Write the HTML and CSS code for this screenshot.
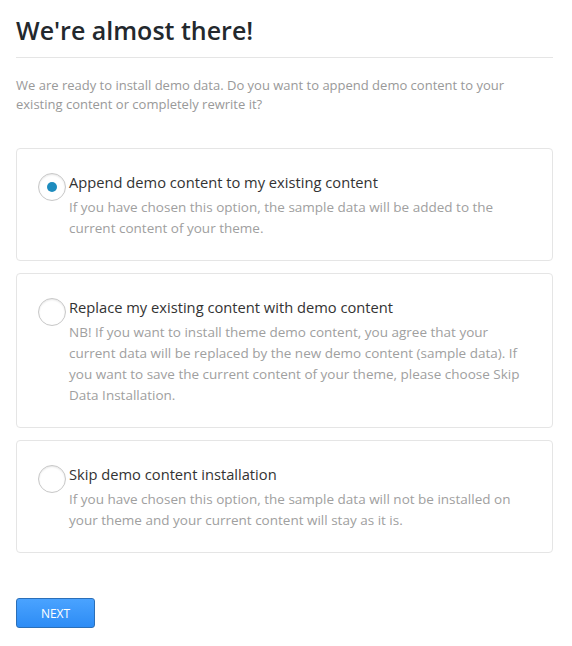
FILE: index.html
```html
<!DOCTYPE html>
<html>
<head>
<meta charset="utf-8">
<link rel="stylesheet" href="styles.css">
</head>
<body>
<div class="page">
  <h1 class="title">We're almost there!</h1>
  <p class="intro">We are ready to install demo data. Do you want to append demo content to your existing content or completely rewrite it?</p>
  <div class="options">
    <label class="card">
      <span class="radio checked"><span class="dot"></span></span>
      <span class="text">
        <span class="label">Append demo content to my existing content</span>
        <span class="desc">If you have chosen this option, the sample data will be added to the current content of your theme.</span>
      </span>
    </label>
    <label class="card">
      <span class="radio"></span>
      <span class="text">
        <span class="label">Replace my existing content with demo content</span>
        <span class="desc">NB! If you want to install theme demo content, you agree that your current data will be replaced by the new demo content (sample data). If you want to save the current content of your theme, please choose Skip Data Installation.</span>
      </span>
    </label>
    <label class="card">
      <span class="radio"></span>
      <span class="text">
        <span class="label">Skip demo content installation</span>
        <span class="desc">If you have chosen this option, the sample data will not be installed on your theme and your current content will stay as it is.</span>
      </span>
    </label>
  </div>
  <button class="next">NEXT</button>
</div>
</body>
</html>
```
FILE: styles.css
```css
html, body { margin: 0; padding: 0; background: #fff; }
body { font-family: "Open Sans", "Noto Sans", sans-serif; }
.page { padding: 14px 19px 0 16px; }
.title {
  margin: 0;
  font-size: 25px;
  font-weight: 600;
  color: #23282d;
  line-height: 32px;
  padding-bottom: 11px;
  border-bottom: 1px solid #e5e5e5;
}
.intro {
  margin: 18px 0 0;
  font-size: 13px;
  line-height: 19px;
  color: #999;
}
.options { margin-top: 34px; display: flex; flex-direction: column; gap: 12px; }
.card {
  display: flex;
  align-items: flex-start;
  border: 1px solid #e5e5e5;
  border-radius: 4px;
  padding: 23px 20px 21px 21px;
}
.radio {
  flex: none;
  box-sizing: border-box;
  width: 28px; height: 28px;
  border: 1px solid #c8c8c8;
  border-radius: 50%;
  box-shadow: inset 0 1px 2px rgba(0,0,0,0.1);
  margin-top: 1px;
  display: flex; align-items: center; justify-content: center;
  background: #fff;
}
.dot { width: 10px; height: 10px; border-radius: 50%; background: #1e8cbe; }
.text { display: flex; flex-direction: column; margin-left: 3px; width: 456px; }
.label { font-size: 14.7px; line-height: 20px; color: #333; }
.desc { font-size: 13.5px; line-height: 21px; color: #a0a0a0; margin-top: 5px; }
.next {
  margin-top: 45px;
  width: 79px; height: 30px;
  border: 1px solid #2b6fb8;
  border-radius: 3px;
  background: linear-gradient(#4aa3ff, #2d8cf5);
  color: #fff;
  font-family: "Open Sans", sans-serif;
  font-size: 12px;
  padding: 0;
}
```
